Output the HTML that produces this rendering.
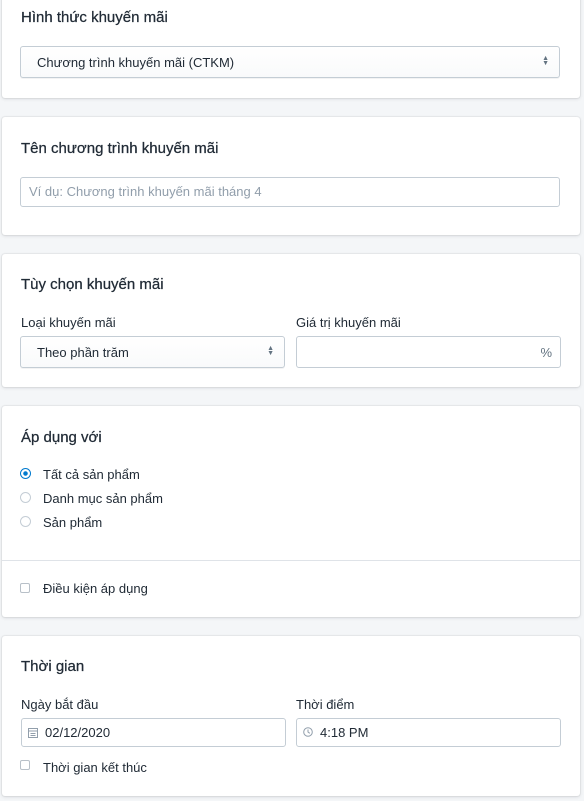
<!DOCTYPE html>
<html><head><meta charset="utf-8"><style>
*{box-sizing:border-box;margin:0;padding:0}
body{width:584px;height:801px;background:#f4f6f8;font-family:"Liberation Sans","Noto Sans CJK SC",sans-serif;color:#212b36;position:relative;overflow:hidden;font-size:13px}
.card{position:absolute;left:2px;width:578px;background:#fff;border-radius:3px;box-shadow:0 0 0 1px rgba(63,63,68,.05),0 1px 3px rgba(63,63,68,.15)}
.a{position:absolute;white-space:nowrap}
.t{font-size:15px;color:#212b36;-webkit-text-stroke:0.25px #212b36}
.in{position:absolute;border:1px solid #c4cdd5;border-radius:3px;background:#fff;font-size:13px;line-height:28px;padding-left:16px}
.sel{background:linear-gradient(#fff,#f9fafb);box-shadow:0 1px 0 rgba(22,29,37,.05)}
.arr{position:absolute;right:10px;top:9px;font-size:7px;line-height:5px;color:#637381}
.radio{position:absolute;width:11px;height:11px;border-radius:50%;border:1px solid #c4cdd5;background:#fff}
.radio.on{border-color:#007ace;background:radial-gradient(circle,#007ace 0 2px,#fff 2.5px)}
.cb{position:absolute;width:10px;height:10px;border:1px solid #b8c0c8;border-radius:2px}
.lbl{font-size:13px}
</style></head><body>
<div class="card" style="top:-4px;height:102px"></div>
<div class="a t" style="left:21px;top:9px">Hình thức khuyến mãi</div>
<div class="in sel" style="left:20px;top:46px;width:540px;height:32px;line-height:31px">Chương trình khuyến mãi (CTKM)<div class="arr">▲<br>▼</div></div>

<div class="card" style="top:117px;height:118px"></div>
<div class="a t" style="left:21px;top:140px">Tên chương trình khuyến mãi</div>
<div class="in" style="left:20px;top:177px;width:540px;height:30px;padding-left:8px;color:#919eab">Ví dụ: Chương trình khuyến mãi tháng 4</div>

<div class="card" style="top:254px;height:133px"></div>
<div class="a t" style="left:21px;top:276px">Tùy chọn khuyến mãi</div>
<div class="a lbl" style="left:21px;top:315px">Loại khuyến mãi</div>
<div class="a lbl" style="left:296px;top:315px">Giá trị khuyến mãi</div>
<div class="in sel" style="left:20px;top:336px;width:265px;height:32px;line-height:31px">Theo phần trăm<div class="arr">▲<br>▼</div></div>
<div class="in" style="left:296px;top:336px;width:265px;height:32px;line-height:31px"><span style="position:absolute;right:8px;color:#637381">%</span></div>

<div class="card" style="top:406px;height:211px"></div>
<div class="a t" style="left:21px;top:429px">Áp dụng với</div>
<div class="radio on" style="left:20px;top:468px"></div><div class="a lbl" style="left:43px;top:467px">Tất cả sản phẩm</div>
<div class="radio" style="left:20px;top:492px"></div><div class="a lbl" style="left:43px;top:491px">Danh mục sản phẩm</div>
<div class="radio" style="left:20px;top:516px"></div><div class="a lbl" style="left:43px;top:515px">Sản phẩm</div>
<div class="a" style="left:2px;top:560px;width:578px;height:1px;background:#dfe3e8"></div>
<div class="cb" style="left:20px;top:583px"></div><div class="a lbl" style="left:43px;top:581px">Điều kiện áp dụng</div>

<div class="card" style="top:636px;height:160px"></div>
<div class="a t" style="left:21px;top:658px">Thời gian</div>
<div class="a lbl" style="left:21px;top:697px">Ngày bắt đầu</div>
<div class="a lbl" style="left:296px;top:697px">Thời điểm</div>
<div class="in" style="left:21px;top:718px;width:265px;height:29px;padding-left:23px;line-height:27px">
<svg style="position:absolute;left:6px;top:8px" width="10" height="11" viewBox="0 0 10 11"><rect x="0.5" y="1.5" width="9" height="9" fill="none" stroke="#919eab"/><line x1="0.5" y1="4" x2="9.5" y2="4" stroke="#919eab"/><line x1="2.5" y1="6.5" x2="7.5" y2="6.5" stroke="#919eab"/><line x1="2.5" y1="8.5" x2="7.5" y2="8.5" stroke="#919eab"/></svg>02/12/2020</div>
<div class="in" style="left:296px;top:718px;width:265px;height:29px;padding-left:23px;line-height:27px">
<svg style="position:absolute;left:6px;top:8px" width="10" height="10" viewBox="0 0 10 10"><circle cx="5" cy="5" r="4.3" fill="none" stroke="#919eab"/><path d="M5 2.5V5l1.8 1.3" fill="none" stroke="#919eab"/></svg>4:18 PM</div>
<div class="cb" style="left:20px;top:760px"></div><div class="a lbl" style="left:43px;top:760px">Thời gian kết thúc</div>
</body></html>
